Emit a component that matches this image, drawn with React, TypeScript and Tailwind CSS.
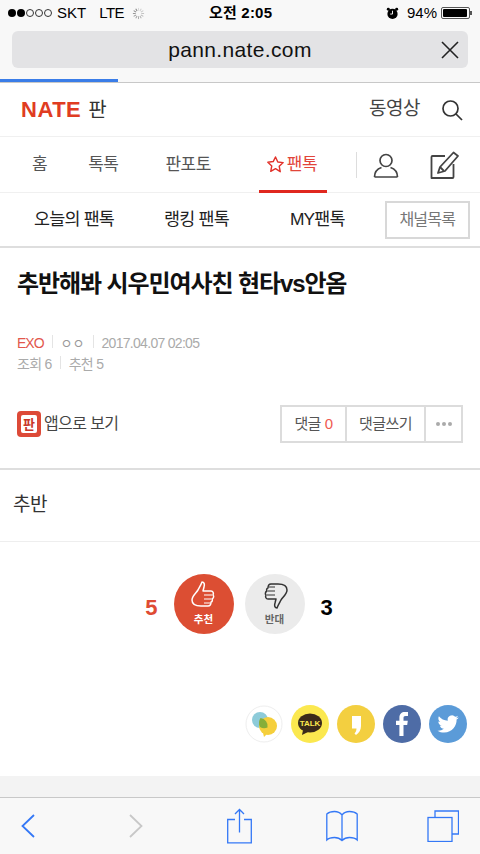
import React from "react";

const KR = "font-['Liberation_Sans','Noto_Sans_CJK_KR',sans-serif]";

function Dots() {
  return (
    <div className="flex items-center gap-[1px]">
      {[0, 1].map((i) => <span key={i} className="w-[8px] h-[8px] rounded-full bg-black" />)}
      {[0, 1, 2].map((i) => <span key={i} className="w-[8px] h-[8px] rounded-full border border-[#333]" />)}
    </div>
  );
}

function Spinner() {
  return (
    <svg width="13" height="13" viewBox="0 0 14 14" stroke="#777" strokeWidth="1">
      {Array.from({ length: 12 }).map((_, i) => (
        <line key={i} x1="7" y1="1" x2="7" y2="4" transform={`rotate(${i * 30} 7 7)`} opacity={0.25 + (i / 12) * 0.75} />
      ))}
    </svg>
  );
}

function StatusBar() {
  return (
    <div className="relative h-[26px] flex items-center justify-between pl-[8px] pr-[8px] text-[15px] text-black">
      <div className="flex items-center">
        <Dots />
        <span className="ml-[5px]">SKT</span>
        <span className="ml-[13px] tracking-[-0.5px]">LTE</span>
        <span className="ml-[8px]"><Spinner /></span>
      </div>
      <div className="absolute left-[209px] top-[2px] font-bold text-[15px] leading-[22px] tracking-[0.2px]">오전 2:05</div>
      <div className="flex items-center">
        <svg width="13" height="13" viewBox="0 0 14 14">
          <circle cx="7" cy="7.500" r="5.500" fill="#000" />
          <circle cx="2.500" cy="2.500" r="1.600" fill="#000" />
          <circle cx="11.500" cy="2.500" r="1.600" fill="#000" />
          <path d="M7 4v3.600H4.500" stroke="#fff" strokeWidth="1" fill="none" />
        </svg>
        <span className="ml-[8px]">94%</span>
        <div className="ml-[4px] w-[29px] h-[12px] border border-[#555] rounded-[2px] p-[1px]">
          <div className="w-[94%] h-full bg-black rounded-[1px]" />
        </div>
        <div className="w-[2px] h-[4px] bg-[#555]" />
      </div>
    </div>
  );
}

function UrlBar() {
  return (
    <div className="relative mx-[12px] mt-[5px] h-[37px] rounded-[6px] bg-[#e3e3e5] flex items-center justify-center text-[21px] text-[#111] font-['Liberation_Sans',sans-serif]">
      <span className="tracking-[0.35px]">pann.nate.com</span>
      <svg className="absolute right-[9px] top-[10px]" width="18" height="18" viewBox="0 0 18 18" stroke="#222" strokeWidth="1.600">
        <path d="M1 1l16 16M17 1L1 17" />
      </svg>
    </div>
  );
}

function Header() {
  return (
    <div className="h-[54px] flex items-center justify-between pl-[21px] pr-[17px] border-b border-[#f0f0f0]">
      <div className="flex items-center">
        <span className="text-[22px] leading-none font-bold text-[#e03c22] tracking-[0.5px] font-['Liberation_Sans',sans-serif]">NATE</span>
        <span className="ml-[7px] text-[20px] text-[#333]">판</span>
      </div>
      <div className="flex items-center">
        <span className="text-[19px] text-[#444] tracking-[-0.5px]">동영상</span>
        <svg className="ml-[21px]" width="22" height="22" viewBox="0 0 22 22" fill="none" stroke="#333" strokeWidth="1.700">
          <circle cx="9.500" cy="9.500" r="7.500" />
          <path d="M15 15l6 6" />
        </svg>
      </div>
    </div>
  );
}

function Nav() {
  return (
    <div className="h-[56px] relative flex items-center border-b border-[#f0f0f0] text-[17px] text-[#555] tracking-[-0.5px]">
      <span className="ml-[32px]">홈</span>
      <span className="ml-[41px]">톡톡</span>
      <span className="ml-[47px]">판포토</span>
      <span className="ml-[55px] flex items-center text-[#e2453a]">
        <svg width="19" height="19" viewBox="0 0 24 24" fill="none" stroke="#e2322a" strokeWidth="1.800" strokeLinejoin="round">
          <path d="M12 2.500l2.900 6.300 6.800.8-5 4.700 1.300 6.800L12 17.200 6 20.600l1.300-6.800-5-4.700 6.800-.8z" />
        </svg>
        <span className="ml-[2px]">팬톡</span>
      </span>
      <div className="absolute left-[259px] bottom-[-1px] w-[68px] h-[3px] bg-[#e0281f]" />
      <div className="ml-[39px] w-px h-[26px] bg-[#ddd]" />
      <svg className="ml-[16px]" width="26" height="26" viewBox="0 0 26 26" fill="none" stroke="#444" strokeWidth="1.700">
        <circle cx="13" cy="8.500" r="6" />
        <path d="M1.500 25c0-6 4-8.500 7-9.500M24.500 25c0-6-4-8.500-7-9.500M1.500 25h23" />
      </svg>
      <svg className="ml-[31px]" width="30" height="30" viewBox="0 0 30 30" fill="none" stroke="#444" strokeWidth="1.800" strokeLinejoin="round">
        <path d="M15 6H2.500a1 1 0 0 0-1 1v21h21a1 1 0 0 0 1-1V14" />
        <path d="M8 23l2-6L23.500 2.500l4.500 3.500L15 21z" />
        <path d="M10 17l4 4" />
      </svg>
    </div>
  );
}

function SubNav() {
  return (
    <div className="h-[55px] flex items-center border-b-2 border-[#dedede] text-[17.400px] text-[#222] tracking-[-0.8px]">
      <span className="ml-[34px]">오늘의 팬톡</span>
      <span className="ml-[50px]">랭킹 팬톡</span>
      <span className="ml-[61px]">MY팬톡</span>
      <span className="ml-[40px] w-[85px] h-[38px] border-2 border-[#d8d8d8] flex items-center justify-center text-[16px] text-[#777]">채널목록</span>
    </div>
  );
}

function Meta() {
  const Sep = () => <span className="inline-block w-px h-[13px] bg-[#e4e4e4]" />;
  return (
    <div className="mt-[33px] pl-[17px] text-[14px] leading-[21px] text-[#aaa] tracking-[-0.7px]">
      <div className="flex items-center">
        <span className="text-[#e2574c] tracking-[-1px]">EXO</span>
        <span className="ml-[8px]"><Sep /></span>
        <span className="ml-[8px] tracking-[0px] text-[#999] text-[13px]">ㅇㅇ</span>
        <span className="ml-[8px]"><Sep /></span>
        <span className="ml-[8px]">2017.04.07 02:05</span>
      </div>
      <div className="flex items-center">
        <span>조회 6</span>
        <span className="ml-[8px]"><Sep /></span>
        <span className="ml-[8px]">추천 5</span>
      </div>
    </div>
  );
}

function ActionRow() {
  return (
    <div className="mt-[30px] h-[38px] pl-[17px] pr-[17px] flex items-center justify-between">
      <div className="flex items-center">
        <span className="w-[24px] h-[26px] rounded-[4px] bg-[#dd4a38] flex items-center justify-center">
          <span className="w-[16px] h-[18px] bg-white rounded-[2px] flex items-center justify-center text-[13px] leading-none font-bold text-[#c9372a]">판</span>
        </span>
        <span className="ml-[3px] text-[16px] text-[#444] tracking-[-0.6px]">앱으로 보기</span>
      </div>
      <div className="flex items-stretch h-[38px] border-2 border-[#dcdcdc] text-[15px] text-[#555] tracking-[-0.6px]">
        <span className="w-[63px] flex items-center justify-center">댓글<span className="ml-[4px] text-[#ef5a50]">0</span></span>
        <span className="w-[79px] flex items-center justify-center border-l-2 border-[#dcdcdc]">댓글쓰기</span>
        <span className="w-[37px] flex items-center justify-center gap-[2px] border-l-2 border-[#dcdcdc]">
          {[0, 1, 2].map((i) => <span key={i} className="w-[4px] h-[4px] rounded-full bg-[#aaa]" />)}
        </span>
      </div>
    </div>
  );
}

function Vote() {
  return (
    <div className="mt-[32px] flex items-center justify-center -translate-x-[1px]">
      <span className="mt-[6px] text-[22px] font-bold text-[#df4b33] mr-[16px]">5</span>
      <div className="w-[60px] h-[60px] rounded-full bg-[#dc4e33] flex flex-col items-center text-white">
        <svg className="mt-[7px]" width="28" height="28" viewBox="0 0 28 28" fill="none" stroke="#fff" strokeWidth="1.500" strokeLinejoin="round">
          <path d="M2 19c0-4 4-7 6-10 1-2 3-5 4-8 2 0 3 2 2 5l-1 4h8c2 0 3 2 2 4 1 1 1 3-1 4 1 1 0 3-1 3 0 2-1 4-3 4h-7c-4 0-9-1-9-6z" />
          <path d="M14 14h8M14 18h7M14 22h6" strokeWidth="1.200" />
        </svg>
        <span className="mt-[4px] text-[10.500px] leading-[12px] font-bold">추천</span>
      </div>
      <div className="ml-[11px] w-[60px] h-[60px] rounded-full bg-[#ebebeb] flex flex-col items-center text-[#666]">
        <svg className="mt-[7px]" width="28" height="28" viewBox="0 0 28 28" fill="none" stroke="#333" strokeWidth="1.500" strokeLinejoin="round">
          <path d="M26 9c0 4-4 7-6 10-1 2-3 5-4 8-2 0-3-2-2-5l1-4H7c-2 0-3-2-2-4-1-1-1-3 1-4-1-1 0-3 1-3 0-2 1-4 3-4h7c4 0 9 1 9 6z" />
          <path d="M14 14H6M14 10H7M14 6H8" strokeWidth="1.200" />
        </svg>
        <span className="mt-[4px] text-[10.500px] leading-[12px] font-bold">반대</span>
      </div>
      <span className="mt-[6px] text-[22px] font-bold text-black ml-[16px]">3</span>
    </div>
  );
}

function Share() {
  return (
    <div className="mt-[71px] pr-[13px] flex justify-end items-center gap-[8px]">
      <svg width="38" height="38" viewBox="0 0 38 38">
        <circle cx="19" cy="19" r="18" fill="#fff" stroke="#eee" />
        <circle cx="15" cy="15" r="8" fill="#8dcbd9" />
        <circle cx="23" cy="21" r="9" fill="#f5cf3c" />
        <path d="M15.500 13a8 8 0 0 1 7 9.500a8 8 0 0 1 -7.500 -0.500a9 9 0 0 1 0.500 -9z" fill="#86ae39" />
        <path d="M18 28l1 4 3-3z" fill="#f5cf3c" />
      </svg>
      <svg width="38" height="38" viewBox="0 0 38 38">
        <circle cx="19" cy="19" r="19" fill="#fbe84f" />
        <ellipse cx="19" cy="18" rx="12" ry="9.500" fill="#3a2a1a" />
        <path d="M12 25l-1 5 6-3z" fill="#3a2a1a" />
        <text x="19" y="21" textAnchor="middle" fontSize="8" fontWeight="700" fill="#fbe84f" fontFamily="Liberation Sans">TALK</text>
      </svg>
      <svg width="38" height="38" viewBox="0 0 38 38">
        <circle cx="19" cy="19" r="19" fill="#f3cf40" />
        <path d="M15 11h9v10c0 4-2 7-5 9l-1.500-1.500c1-1 2-3 2-5H15z" fill="#fff" />
      </svg>
      <svg width="38" height="38" viewBox="0 0 38 38">
        <circle cx="19" cy="19" r="19" fill="#4e6ca6" />
        <path d="M20.500 31V20h3.700l.6-4.300h-4.300v-2.700c0-1.300.4-2.100 2.200-2.100H25V7.100C24.600 7 23.300 7 21.800 7c-3.200 0-5.400 2-5.400 5.500v3.200H13V20h3.400v11z" fill="#fff" />
      </svg>
      <svg width="38" height="38" viewBox="0 0 38 38">
        <circle cx="19" cy="19" r="19" fill="#5b9bd8" />
        <path d="M29.500 12.500c-.8.300-1.600.6-2.500.7.900-.5 1.600-1.400 1.900-2.400-.8.500-1.800.9-2.700 1a4.300 4.300 0 0 0-7.400 3.900c-3.600-.2-6.800-1.900-8.900-4.500-1.100 2-.6 4.400 1.300 5.700-.7 0-1.400-.2-1.900-.5 0 2.100 1.500 3.900 3.500 4.300-.6.200-1.300.2-1.900.1.500 1.700 2.100 3 4 3-1.900 1.500-4.200 2.100-6.400 1.900 1.900 1.200 4.200 1.900 6.700 1.900 8.100 0 12.700-6.900 12.400-13 .9-.6 1.600-1.400 2.100-2.200z" fill="#fff" />
      </svg>
    </div>
  );
}

function Toolbar() {
  return (
    <div className="h-[57px] border-t-[1.500px] border-[#c8c8c8] bg-[#f8f8f8] flex items-center">
      <svg className="ml-[20px]" width="16" height="26" viewBox="0 0 16 26" fill="none" stroke="#3478f6" strokeWidth="1.800"><path d="M14 2L2.500 13 14 24" /></svg>
      <svg className="ml-[92px]" width="16" height="26" viewBox="0 0 16 26" fill="none" stroke="#c8c8c8" strokeWidth="1.800"><path d="M2 2l11.500 11L2 24" /></svg>
      <svg className="ml-[83px]" width="25" height="36" viewBox="0 0 25 36" fill="none" stroke="#3478f6" strokeWidth="1.300"><path d="M8 11.500H.7V34.800h23.600V11.500H17M12.500 24.500V1.500M8 6l4.500-4.500L17 6" /></svg>
      <svg className="ml-[74px]" width="32" height="32" viewBox="0 0 32 32" fill="none" stroke="#3478f6" strokeWidth="1.300"><path d="M16 5C14 2.500 11 1.500 8.500 1.500 5.500 1.500 3 2 .8 4v26c2-2 4.700-2.500 7.700-2.500 3 0 5.500 1 7.500 3 2-2 4.500-3 7.500-3 3 0 5.700.5 7.700 2.500V4C29 2 26.500 1.500 23.500 1.500 21 1.500 18 2.500 16 5zM16 5v25" /></svg>
      <svg className="ml-[69px]" width="32" height="32" viewBox="0 0 32 32" fill="none" stroke="#3478f6" strokeWidth="1.300"><path d="M8 7.500V1h23.500v23H25" /><rect x="1" y="7.500" width="24" height="24" /></svg>
    </div>
  );
}

export default function App() {
  return (
    <div className={`w-[480px] h-[854px] overflow-hidden bg-white flex flex-col ${KR}`}>
      <div className="bg-[#f8f8f8] h-[83px] flex flex-col shrink-0 border-b border-[#c8c8c8] relative">
        <StatusBar />
        <UrlBar />
        <div className="absolute left-0 bottom-0 w-[118px] h-[3px] bg-[#3a7de8]" />
      </div>
      <Header />
      <Nav />
      <SubNav />
      <h1 className="mt-[20px] pl-[17px] text-[24px] leading-[32px] font-bold text-[#111] tracking-[-1.100px]">추반해봐 시우민여사친 현타vs안옴</h1>
      <Meta />
      <ActionRow />
      <div className="mt-[25px] border-t-2 border-[#dedede] h-[73px] flex items-center pl-[13px] text-[19px] text-[#333] tracking-[-0.5px]">추반</div>
      <div className="h-px bg-[#eee]" />
      <Vote />
      <Share />
      <div className="flex-1 min-h-0 mt-[33px] bg-[#f3f3f3]" />
      <Toolbar />
    </div>
  );
}
